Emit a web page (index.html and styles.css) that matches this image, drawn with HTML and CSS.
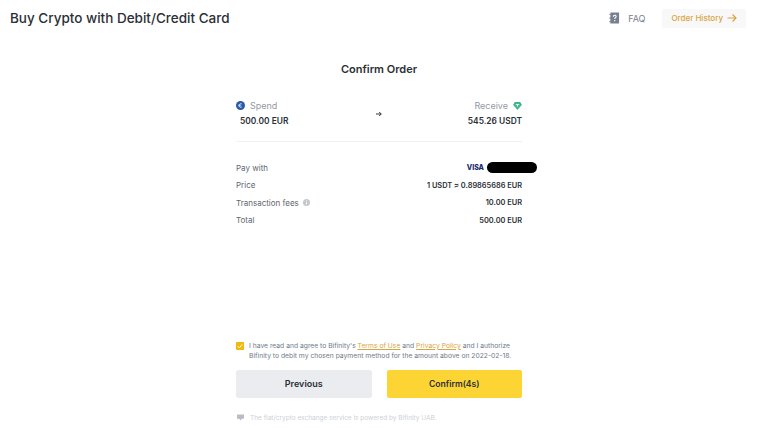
FILE: index.html
```html
<!DOCTYPE html>
<html lang="en">
<head>
<meta charset="utf-8">
<title>Buy Crypto</title>
<link rel="stylesheet" href="styles.css">
</head>
<body>
<header class="top">
  <h1 class="title">Buy Crypto with Debit/Credit Card</h1>
  <div class="top-right">
    <a class="faq">
      <svg class="faq-icon" viewBox="0 0 12 12" width="11" height="12"><path fill="#76808f" fill-rule="evenodd" d="M1.500 0H11v12H1.500v-1.500H.3v-1h1.200V6.500H.3v-1h1.200V2.500H.3v-1h1.200zM4.200 4.600h1.200c0-.6.3-1 .9-1s.9.3.9.8c0 .9-1.500 1-1.500 2.600h1.200c0-1.100 1.500-1.300 1.500-2.700C8.400 3.100 7.500 2.500 6.300 2.500 5 2.500 4.200 3.300 4.200 4.600zM5.700 8.200v1.300h1.200V8.200z"/></svg>
      <span>FAQ</span>
    </a>
    <a class="history">
      <span>Order History</span>
      <svg viewBox="0 0 10 10" width="10" height="10"><path fill="none" stroke="#d9a441" stroke-width="1.200" d="M.5 5h8.500M5.500 1.500 9 5 5.500 8.500"/></svg>
    </a>
  </div>
</header>
<main class="panel">
  <h2 class="heading">Confirm Order</h2>
  <section class="summary">
    <div class="side">
      <div class="label">
        <svg viewBox="0 0 10 10" width="9" height="9"><circle cx="5" cy="5" r="5" fill="#2a5ba8"/><path fill="none" stroke="#fff" stroke-width=".8" d="M6.500 3.300a2 2 0 1 0 0 3.400M2.800 4.500h2.500M2.800 5.500h2.500"/></svg>
        <span>Spend</span>
      </div>
      <div class="amount amount-left">500.00 EUR</div>
    </div>
    <svg class="arrow" viewBox="0 0 6 6" width="6" height="6"><path fill="none" stroke="#1e2329" stroke-width=".9" d="M0 3h5.200M3.200 1 5.200 3 3.200 5"/></svg>
    <div class="side side-right">
      <div class="label">
        <span>Receive</span>
        <svg viewBox="0 0 10 9" width="9" height="8"><path fill="#3fb68b" d="M2 0h6l2 3-5 6-5-6z"/><path fill="#fff" d="M3 2.200h4v1H5.600V5H4.400V3.200H3z"/></svg>
      </div>
      <div class="amount">545.26 USDT</div>
    </div>
  </section>
  <section class="details">
    <div class="row">
      <span class="key">Pay with</span>
      <div class="pay">
        <span class="visa">VISA</span>
        <span class="mask"></span>
      </div>
    </div>
    <div class="row">
      <span class="key">Price</span>
      <span class="val">1 USDT ≈ 0.89865686 EUR</span>
    </div>
    <div class="row">
      <span class="key key-info">Transaction fees
        <svg viewBox="0 0 8 8" width="7" height="7"><circle cx="4" cy="4" r="4" fill="#c4c8ce"/><path stroke="#fff" stroke-width="1" d="M4 3.400V6.200M4 1.600v1"/></svg>
      </span>
      <span class="val">10.00 EUR</span>
    </div>
    <div class="row">
      <span class="key">Total</span>
      <span class="val">500.00 EUR</span>
    </div>
  </section>
  <section class="actions">
    <div class="agree">
      <span class="check"><svg viewBox="0 0 8 8" width="6" height="6"><path fill="none" stroke="#fff" stroke-width="1.300" d="M1 4.200 3.200 6.400 7 1.800"/></svg></span>
      <p class="agree-text">I have read and agree to Bifinity's <a class="link">Terms of Use</a> and <a class="link">Privacy Policy</a> and I authorize Bifinity to debit my chosen payment method for the amount above on 2022-02-18.</p>
    </div>
    <div class="buttons">
      <button class="btn btn-prev">Previous</button>
      <button class="btn btn-confirm">Confirm(4s)</button>
    </div>
    <div class="powered">
      <svg viewBox="0 0 8 8" width="7" height="7"><path fill="#b7bdc6" d="M0 .5h8v5H5.500L4 7.500 2.500 5.500H0z"/></svg>
      <span>The fiat/crypto exchange service is powered by Bifinity UAB.</span>
    </div>
  </section>
</main>
</body>
</html>
```
FILE: styles.css
```css
* { box-sizing: border-box; }
html, body { margin: 0; height: 100%; }
body {
  width: 768px;
  height: 428px;
  background: #fff;
  font-family: Inter, "Liberation Sans", sans-serif;
  color: #1e2329;
  overflow: hidden;
}
.top {
  display: flex;
  justify-content: space-between;
  align-items: center;
  height: 36px;
  padding: 0 22px 0 10px;
}
.title {
  margin: 0;
  font-size: 13.500px;
  font-weight: 500;
  color: #2b2f36;
}
.top-right { display: flex; align-items: center; gap: 17px; }
.faq { display: flex; align-items: center; gap: 8px; font-size: 9px; color: #76808f; }
.history {
  display: flex;
  align-items: center;
  gap: 4px;
  height: 19px;
  padding: 0 9px;
  background: #f8f8f8;
  border-radius: 2px;
  font-size: 8px;
  font-weight: 500;
  color: #d9a441;
}
.panel { width: 286px; margin-left: 236px; }
.heading {
  margin: 26px 0 0;
  text-align: center;
  font-size: 11px;
  font-weight: 600;
  line-height: 14px;
  color: #2b2f36;
}
.summary {
  display: flex;
  justify-content: space-between;
  align-items: center;
  margin-top: 24px;
  padding-bottom: 14px;
  border-bottom: 1px solid #f0f1f2;
}
.side { display: flex; flex-direction: column; gap: 5px; }
.side-right { align-items: flex-end; }
.label { display: flex; align-items: center; gap: 5px; font-size: 9px; line-height: 11px; color: #929aa5; }
.amount { font-size: 8.400px; line-height: 11px; font-weight: 600; color: #2b2f36; }
.amount-left { padding-left: 4px; }
.arrow { margin-left: 2px; }
.details { display: flex; flex-direction: column; gap: 6.600px; margin-top: 20px; }
.row { display: flex; justify-content: space-between; align-items: center; height: 11px; font-size: 8px; }
.key { color: #5f6772; }
.key-info { display: flex; align-items: center; gap: 4px; }
.val { font-size: 7.400px; font-weight: 600; color: #2b2f36; }
.pay { display: flex; align-items: center; gap: 3px; margin-right: -15px; }
.visa { font-size: 7px; font-weight: 800; color: #1a2a6c; }
.mask { width: 50px; height: 11px; border-radius: 6px; background: #000; }
.actions { margin-top: 115px; }
.agree { display: flex; gap: 5px; }
.check {
  display: flex;
  flex: none;
  align-items: center;
  justify-content: center;
  width: 8px;
  height: 8px;
  margin-top: 1px;
  border-radius: 1px;
  background: #f0b90b;
}
.agree-text { margin: 0; font-size: 6.750px; line-height: 10px; color: #707a8a; }
.link { color: #d9a441; text-decoration: underline; }
.buttons { display: flex; gap: 15px; margin-top: 9px; }
.btn {
  flex: 1;
  height: 28px;
  border: 0;
  border-radius: 2px;
  font-family: inherit;
  font-size: 9px;
  font-weight: 600;
  color: #2b2f36;
}
.btn-prev { background: #eaecef; }
.btn-confirm { background: #fcd535; font-size: 8.600px; }
.powered {
  display: flex;
  align-items: center;
  gap: 6px;
  margin-top: 16px;
  padding-left: 1px;
  font-size: 6.500px;
  color: #cdd1d6;
}
```
